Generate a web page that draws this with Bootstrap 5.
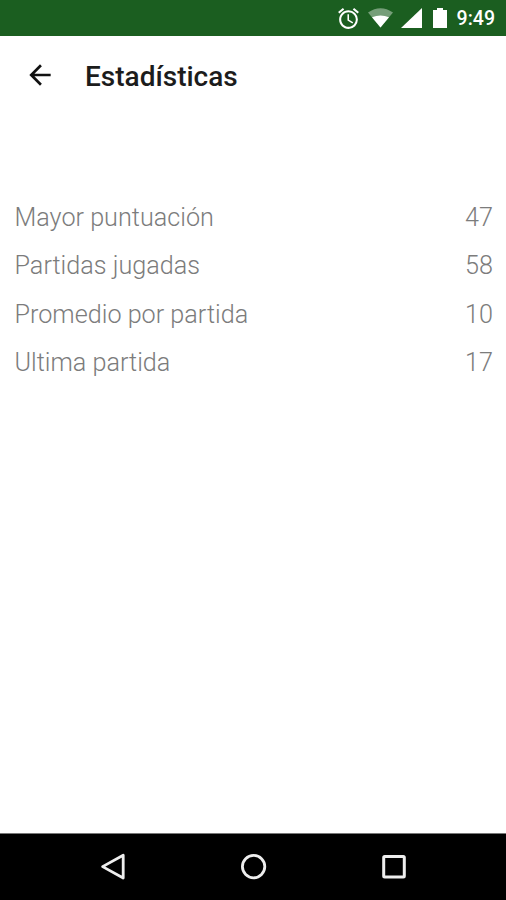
<!DOCTYPE html>
<html lang="es">
<head>
<meta charset="utf-8">
<meta name="viewport" content="width=device-width, initial-scale=1">
<title>Estadísticas</title>
<link href="https://cdn.jsdelivr.net/npm/bootstrap@5.3.0/dist/css/bootstrap.min.css" rel="stylesheet">
<style>
body{font-family:Roboto,sans-serif;background:#fff;height:900px;overflow:hidden}
svg{display:block;flex:none}
.status-bar{height:36px;background:#1b5e20;padding-right:11px}
.clock{font-size:19.5px;font-weight:500;line-height:36px;margin-left:10px;padding-top:2px}
.app-bar{height:80px;padding-left:24px}
.app-title{font-size:28px;font-weight:500;line-height:80px;color:#1c1c1c;margin:0 0 0 29px;padding-top:2px}
.app-bar svg{margin-top:-2px}
.stats{padding:78px 13px 0 14.5px;font-size:25.2px;font-weight:300;color:#7c7c7c}
.stat-row{height:48.3px;line-height:48.3px}
.system-nav{height:67px;background:#000;border-top:1px solid #777;padding:0 98px 0 99px}
</style>
</head>
<body class="d-flex flex-column">
<header class="status-bar d-flex align-items-center justify-content-end text-white">
<svg width="25" height="25" viewBox="0 0 24 24" fill="#fff"><path d="M22 5.72l-4.6-3.86-1.29 1.53 4.6 3.86L22 5.72zM7.88 3.39L6.6 1.86 2 5.71l1.29 1.53 4.59-3.85zM12.5 8H11v6l4.75 2.85.75-1.23-4-2.37V8zM12 4c-4.97 0-9 4.03-9 9s4.02 9 9 9a9 9 0 0 0 0-18zm0 16c-3.87 0-7-3.13-7-7s3.13-7 7-7 7 3.13 7 7-3.13 7-7 7z"/></svg>
<svg width="25" height="20" viewBox="0 0 25 20" style="margin-left:7px"><path d="M12.5 19.5L0 4.5Q12.5-4 25 4.5Z" fill="#fff" opacity=".4"/><path d="M12.5 19.5L4 9.3Q12.5 5.6 21 9.3Z" fill="#fff"/></svg>
<svg class="ms-2" width="21" height="20" viewBox="0 0 21 20"><path d="M0 20L21 0V20Z" fill="#fff"/></svg>
<svg width="14" height="20" viewBox="0 0 14 20" style="margin-left:11px"><path d="M4 0h6v2h4v18H0V2h4z" fill="#fff"/></svg>
<span class="clock">9:49</span>
</header>
<nav class="app-bar d-flex align-items-center">
<svg width="32" height="32" viewBox="0 0 24 24"><path d="M20 11H7.83l5.59-5.59L12 4l-8 8 8 8 1.41-1.41L7.83 13H20v-2z" fill="#111"/></svg>
<h1 class="app-title">Estadísticas</h1>
</nav>
<main class="stats flex-grow-1">
<div class="stat-row d-flex justify-content-between"><span>Mayor puntuación</span><span>47</span></div>
<div class="stat-row d-flex justify-content-between"><span>Partidas jugadas</span><span>58</span></div>
<div class="stat-row d-flex justify-content-between"><span>Promedio por partida</span><span>10</span></div>
<div class="stat-row d-flex justify-content-between"><span>Ultima partida</span><span>17</span></div>
</main>
<footer class="system-nav d-flex align-items-center justify-content-between">
<svg width="28" height="28" viewBox="0 0 28 28" fill="none" stroke="#eee" stroke-width="2.8" stroke-linejoin="round"><path d="M24.2 2.2V25L3.6 13.6Z"/></svg>
<svg width="28" height="28" viewBox="0 0 28 28" fill="none" stroke="#eee" stroke-width="2.8"><circle cx="13.6" cy="13.6" r="11.2"/></svg>
<svg width="28" height="28" viewBox="0 0 28 28" fill="none" stroke="#eee" stroke-width="3"><rect x="3.7" y="3.4" width="20.6" height="20.6" rx="1"/></svg>
</footer>
<script src="https://cdn.jsdelivr.net/npm/bootstrap@5.3.0/dist/js/bootstrap.bundle.min.js"></script>
</body>
</html>
